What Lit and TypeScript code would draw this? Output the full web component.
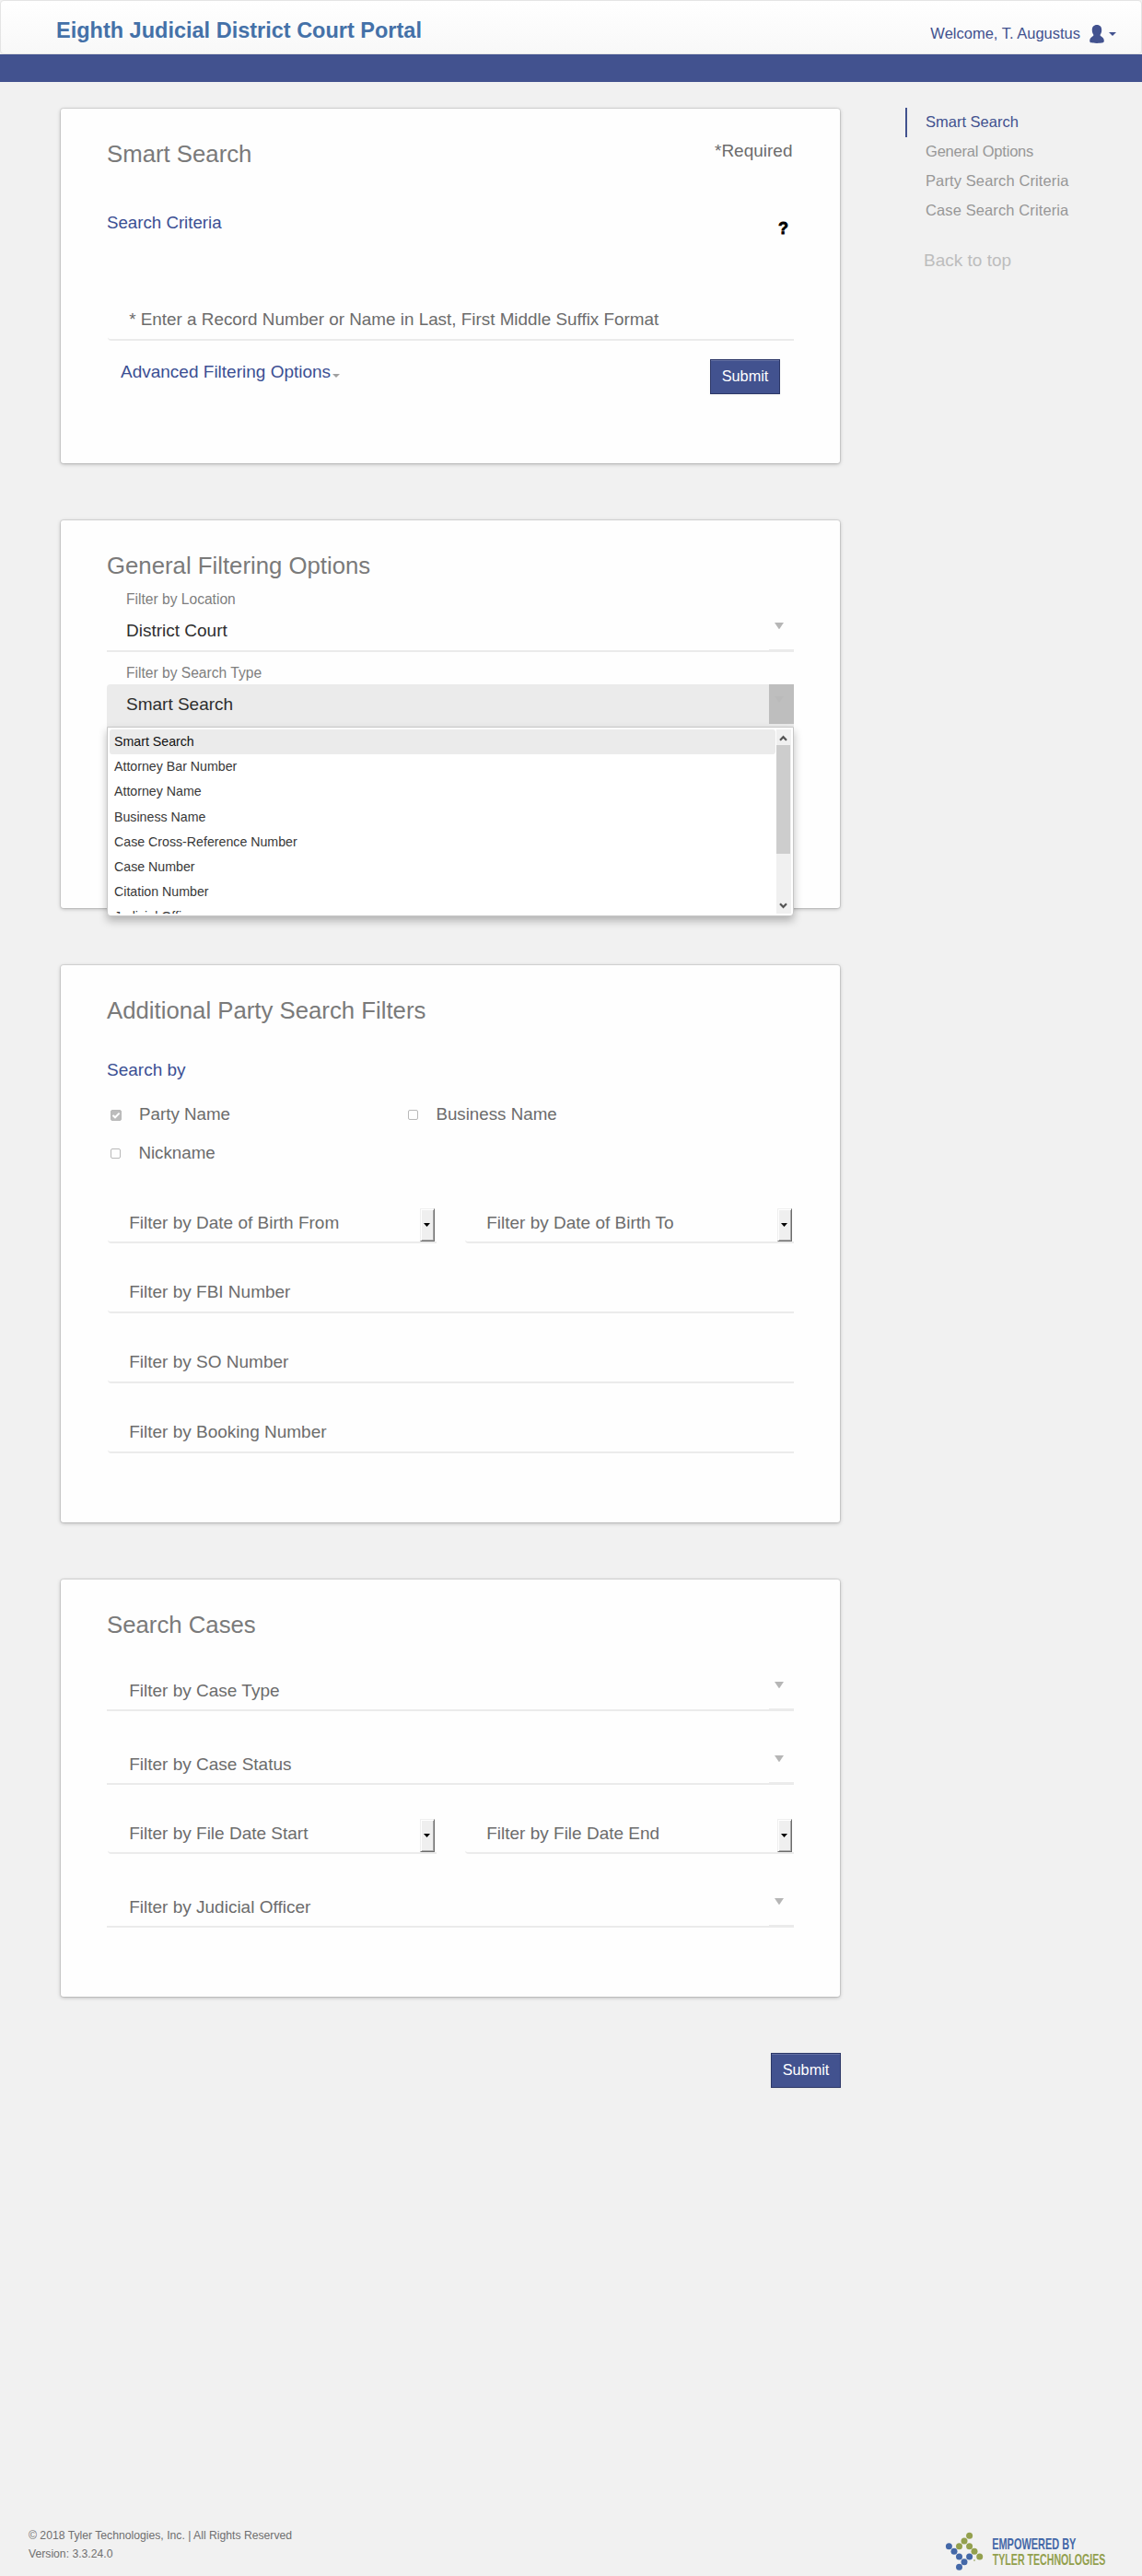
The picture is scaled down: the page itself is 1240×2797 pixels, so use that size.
import { LitElement, html, css, svg } from "lit";
import { customElement } from "lit/decorators.js";
import { classMap } from "lit/directives/class-map.js";

const NAV = [
  { label: "Smart Search", fit: "", active: true },
  { label: "General Options", fit: "tight", active: false },
  { label: "Party Search Criteria", fit: "wide", active: false },
  { label: "Case Search Criteria", fit: "wide", active: false },
];

const SEARCH_TYPES = [
  "Smart Search",
  "Attorney Bar Number",
  "Attorney Name",
  "Business Name",
  "Case Cross-Reference Number",
  "Case Number",
  "Citation Number",
  "Judicial Officer",
];

const GREEN_DOTS = [[26.6, 5.3], [21, 11], [15.5, 16.7], [26.6, 16.7], [32, 22.3], [37.7, 28]];
const BLUE_DOTS = [[4.4, 16.7], [10, 22.3], [15.5, 28], [26.6, 28], [21, 33.7], [15.5, 39.3]];

@customElement("app-root")
export class AppRoot extends LitElement {
  static styles = css`
    :host {
      display: flex;
      flex-direction: column;
      box-sizing: border-box;
      width: 1240px;
      height: 2797px;
      background: #f1f1f1;
      font: 19px/21px "Liberation Sans", Arial, sans-serif;
      color: #6c6c6c;
      white-space: nowrap;
    }
    * { box-sizing: border-box; }
    svg { display: block; }
    h1, h2, h3 { margin: 0; font-weight: normal; }

    .header {
      display: flex;
      justify-content: space-between;
      height: 59px;
      padding: 0 27px 0 60px;
      border: 1px solid #e4e4e4;
      border-radius: 4px;
      background: linear-gradient(#ffffff, #f8f8f8);
    }
    .brand {
      margin-top: 19px;
      font-size: 23.5px;
      line-height: 26px;
      font-weight: bold;
      color: #4471a8;
    }
    .user { display: flex; margin-top: 26px; color: #42528f; font-size: 16.5px; line-height: 18px; }
    .user-icon { margin-left: 10px; }
    .user-caret { margin: 8px 0 0 5px; }
    .band { height: 30px; background: #42528f; }

    .body { display: flex; align-items: flex-start; padding: 29px 0 0 66px; flex: 1; }
    .main { display: flex; flex-direction: column; gap: 62px; width: 846px; }
    .card {
      padding: 35px 50px 75px;
      background: #fefefe;
      border-radius: 3px;
      box-shadow: 0 0 0 1px rgba(0, 0, 0, 0.08), 0 1px 4px rgba(0, 0, 0, 0.26);
    }
    .card-general { padding-bottom: 197px; }
    .title { font-size: 25.76px; line-height: 28px; color: #7a7a7a; }
    .row { display: flex; justify-content: space-between; align-items: flex-start; }
    .required { margin-right: 1.5px; }
    .section { color: #3b4f93; font-size: 19px; }
    .criteria { margin-top: 50px; height: 21px; }
    .criteria .section { font-size: 18.7px; }
    .help {
      margin: 7px 6px 0 0;
      font-weight: bold;
      color: #000;
      -webkit-text-stroke: 0.8px #000;
      font-size: 18px;
    }
    .search-by { margin-top: 40px; }

    .field {
      display: flex;
      justify-content: space-between;
      height: 40px;
      margin-left: 1px;
      padding: 6px 0 0 23.2px;
      border-bottom: 2px solid #ebebeb;
      border-bottom-left-radius: 4px;
    }
    .record { margin-top: 78px; font-size: 18.88px; }
    .stack { display: flex; flex-direction: column; gap: 36px; margin-top: 36px; }
    .dates { display: grid; grid-template-columns: 1fr 1fr; gap: 31px; margin-left: 1px; }
    .dates .field { margin-left: 0; padding-top: 7px; padding-right: 2px; }
    .spin {
      display: flex;
      align-items: center;
      justify-content: center;
      width: 16px;
      height: 36px;
      margin-top: -5px;
      padding: 0 1px 0 0;
      background: #efefef;
      border: 1px solid;
      border-color: #efefef #6c6c6c #6c6c6c #efefef;
      box-shadow: inset 1px 1px #fff, inset -1px -1px #a8a8a8;
    }

    .actions { margin: 20px 15px 0; }
    .advanced { display: flex; padding-top: 3px; color: #3b4f93; }
    .advanced svg { margin: 13px 0 0 2px; }
    .submit {
      height: 38px;
      width: 76px;
      border: 1px solid #2c3767;
      background: #42528f;
      box-shadow: inset 0 1px rgba(255, 255, 255, 0.18), 0 1px 2px rgba(0, 0, 0, 0.06);
      color: #fff;
      font: 16.3px/18px "Liberation Sans", Arial, sans-serif;
      padding: 8px 0 10px;
      text-align: center;
    }
    .final { align-self: flex-end; margin: -1px -1px 0 0; }

    .label { margin: 14px 0 4px 21px; font-size: 15.6px; line-height: 17px; color: #7e7e7e; }
    .select {
      position: relative;
      display: flex;
      justify-content: space-between;
      height: 45px;
      border-bottom: 2px solid #ebebeb;
    }
    .value { padding: 11px 0 0 21px; color: #2e2e2e; }
    .placeholder { padding: 12px 0 0 24.2px; }
    .drop {
      width: 27px;
      padding: 13px 0 0 6px;
      border-bottom: 1px solid #ebebeb;
    }
    .open { height: 46px; background: #ebebeb; border: 0; border-radius: 4px 0 0 0; }
    .open .drop { height: 43px; background: #bebebe; border: 0; }
    .popup {
      position: absolute;
      z-index: 1;
      top: 46px;
      left: 0;
      display: flex;
      width: 746px;
      height: 206px;
      padding: 2px;
      background: #fff;
      border: 1px solid #c6c6c6;
      border-radius: 0 0 4px 4px;
      box-shadow: 0 5px 10px rgba(0, 0, 0, 0.26);
    }
    .options { width: 723px; height: 200px; overflow: hidden; }
    .option {
      height: 27.2px;
      padding-left: 5px;
      font-size: 14.2px;
      line-height: 26px;
      color: #383838;
    }
    .option.on { background: #ebebeb; border-radius: 3px; color: #111; }
    .scroll {
      display: flex;
      flex-direction: column;
      width: 16px;
      height: 200px;
      margin-left: 1px;
      background: #f0f0f0;
    }
    .scroll svg { margin: 6px 0 0 3px; }
    .thumb { width: 15px; height: 118px; margin: 4px 0 47px; background: #cdcdcd; }

    .checks {
      display: grid;
      grid-template-columns: 323px 1fr;
      gap: 21px 0;
      margin: 27px 0 48px 4px;
    }
    .check { display: flex; font-size: 18.75px; height: 21px; }
    .box {
      width: 11px;
      height: 11px;
      margin: 6px 19.4px 0 0;
      border: 1px solid #b9b9b9;
      border-radius: 2px;
    }
    .box.on { width: 12px; height: 12px; margin-right: 19px; background: #bcbcbc; }

    .first { margin-top: 35px; }
    .cases { display: flex; flex-direction: column; gap: 35px; }

    .side { display: flex; flex-direction: column; margin: -1px 0 0 71px; }
    .nav {
      height: 32px;
      padding: 6px 0 0 20px;
      border-left: 2px solid transparent;
      color: #979797;
      font-size: 16.5px;
      line-height: 19px;
    }
    .nav.active { border-color: #42528f; color: #42528f; }
    .nav.wide { letter-spacing: 0.11px; }
    .nav.tight { letter-spacing: -0.2px; }
    .top { margin: 27px 0 0 20px; color: #bdbdbd; }

    .footer {
      display: flex;
      justify-content: space-between;
      height: 51px;
      padding: 0 39px 0 31px;
      font-size: 12.2px;
      line-height: 20px;
      color: #6f6f6f;
    }
    .legal { margin-top: -3px; }
    .logo { margin-top: 2px; overflow: visible; }
  `;

  private caret(w: number, h: number, fill: string) {
    return html`<svg width=${w} height=${h} viewBox="0 0 ${w} ${h}">
      <polygon points="0,0 ${w},0 ${w / 2},${h}" fill=${fill} />
    </svg>`;
  }

  private submit(extra = "") {
    return html`<button class="submit ${extra}">Submit</button>`;
  }

  private select(label: string) {
    return html`<div class="select">
      <span class="placeholder">${label}</span>
      <span class="drop">${this.caret(10, 7.4, "#b6b6b6")}</span>
    </div>`;
  }

  private dates(from: string, to: string) {
    return html`<div class="dates">
      ${[from, to].map(
        (t) => html`<div class="field">
          <span>${t}</span><span class="spin">${this.caret(7, 4, "#000")}</span>
        </div>`
      )}
    </div>`;
  }

  private check(label: string, on = false) {
    return html`<div class="check">
      <span class=${classMap({ box: true, on })}>
        ${on
          ? html`<svg width="10" height="10" viewBox="0 0 10 10">
              <path d="M1.5 5 L4 7.3 L8.6 2.6" fill="none" stroke="#fff" stroke-width="2" />
            </svg>`
          : ""}
      </span>
      <span>${label}</span>
    </div>`;
  }

  private chevron(d: string) {
    return html`<svg width="9" height="7" viewBox="0 0 9 7">
      <path d=${d} fill="none" stroke="#555" stroke-width="2.2" />
    </svg>`;
  }

  render() {
    return html`
      <header class="header">
        <h1 class="brand">Eighth Judicial District Court Portal</h1>
        <div class="user">
          <span>Welcome, T. Augustus</span>
          <svg class="user-icon" width="16" height="20" viewBox="0 0 16 20" fill="#42528f">
            <path d="M8 0C11.4 0 13.2 2.2 13.2 5.6C13.2 8 12.6 9.5 11.5 11C11.6 11.9 12.4 12.2 13.4 13C15.2 14.4 15.8 15.6 15.8 17.6C15.8 19.4 14 20 8 20S0.2 19.4 0.2 17.6C0.2 15.6 0.8 14.4 2.6 13C3.6 12.2 4.4 11.9 4.5 11C3.4 9.5 2.8 8 2.8 5.6C2.8 2.2 4.6 0 8 0Z" />
          </svg>
          <span class="user-caret">${this.caret(8, 4, "#42528f")}</span>
        </div>
      </header>
      <div class="band"></div>

      <div class="body">
        <main class="main">
          <section class="card">
            <div class="row">
              <h2 class="title">Smart Search</h2>
              <span class="required">*Required</span>
            </div>
            <div class="row criteria">
              <h3 class="section">Search Criteria</h3>
              <span class="help">?</span>
            </div>
            <div class="field record">* Enter a Record Number or Name in Last, First Middle Suffix Format</div>
            <div class="row actions">
              <span class="advanced">Advanced Filtering Options ${this.caret(8, 4, "#a0a0a0")}</span>
              ${this.submit()}
            </div>
          </section>

          <section class="card card-general">
            <h2 class="title">General Filtering Options</h2>
            <div class="label">Filter by Location</div>
            <div class="select">
              <span class="value">District Court</span>
              <span class="drop">${this.caret(10, 7.4, "#b6b6b6")}</span>
            </div>
            <div class="label">Filter by Search Type</div>
            <div class="select open">
              <span class="value">Smart Search</span>
              <span class="drop">${this.caret(10, 7, "#bababa")}</span>
              <div class="popup">
                <div class="options">
                  ${SEARCH_TYPES.map(
                    (t, i) => html`<div class=${classMap({ option: true, on: i === 0 })}>${t}</div>`
                  )}
                </div>
                <div class="scroll">
                  ${this.chevron("M1 5.8 L4.5 2.2 L8 5.8")}
                  <div class="thumb"></div>
                  ${this.chevron("M1 1.2 L4.5 4.8 L8 1.2")}
                </div>
              </div>
            </div>
          </section>

          <section class="card">
            <h2 class="title">Additional Party Search Filters</h2>
            <h3 class="section search-by">Search by</h3>
            <div class="checks">
              ${this.check("Party Name", true)} ${this.check("Business Name")} ${this.check("Nickname")}
            </div>
            ${this.dates("Filter by Date of Birth From", "Filter by Date of Birth To")}
            <div class="stack">
              <div class="field">Filter by FBI Number</div>
              <div class="field">Filter by SO Number</div>
              <div class="field">Filter by Booking Number</div>
            </div>
          </section>

          <section class="card">
            <h2 class="title">Search Cases</h2>
            <div class="cases first">
              ${this.select("Filter by Case Type")} ${this.select("Filter by Case Status")}
              ${this.dates("Filter by File Date Start", "Filter by File Date End")}
              ${this.select("Filter by Judicial Officer")}
            </div>
          </section>
          ${this.submit("final")}
        </main>

        <nav class="side">
          ${NAV.map(
            (n) => html`<div
              class=${classMap({ nav: true, active: n.active, wide: n.fit === "wide", tight: n.fit === "tight" })}
            >
              ${n.label}
            </div>`
          )}
          <div class="top">Back to top</div>
        </nav>
      </div>

      <footer class="footer">
        <div class="legal">
          <div>© 2018 Tyler Technologies, Inc. | All Rights Reserved</div>
          <div>Version: 3.3.24.0</div>
        </div>
        <svg class="logo" width="175" height="45" viewBox="0 0 175 45">
          ${GREEN_DOTS.map(([x, y]) => svg`<circle cx=${x} cy=${y} r="3.5" fill="#93a04e" />`)}
          ${BLUE_DOTS.map(([x, y]) => svg`<circle cx=${x} cy=${y} r="3.5" fill="#4468a8" />`)}
          <circle cx="32" cy="32" r="0.9" fill="#a9b37a" />
          <g font-family="Liberation Sans" font-weight="bold" font-size="16.6">
            <text transform="translate(51.2 20) scale(0.66 1)" fill="#4468a8">EMPOWERED BY</text>
            <text transform="translate(51.8 37.3) scale(0.64 1)" fill="#93a04e">TYLER TECHNOLOGIES</text>
          </g>
        </svg>
      </footer>
    `;
  }
}
